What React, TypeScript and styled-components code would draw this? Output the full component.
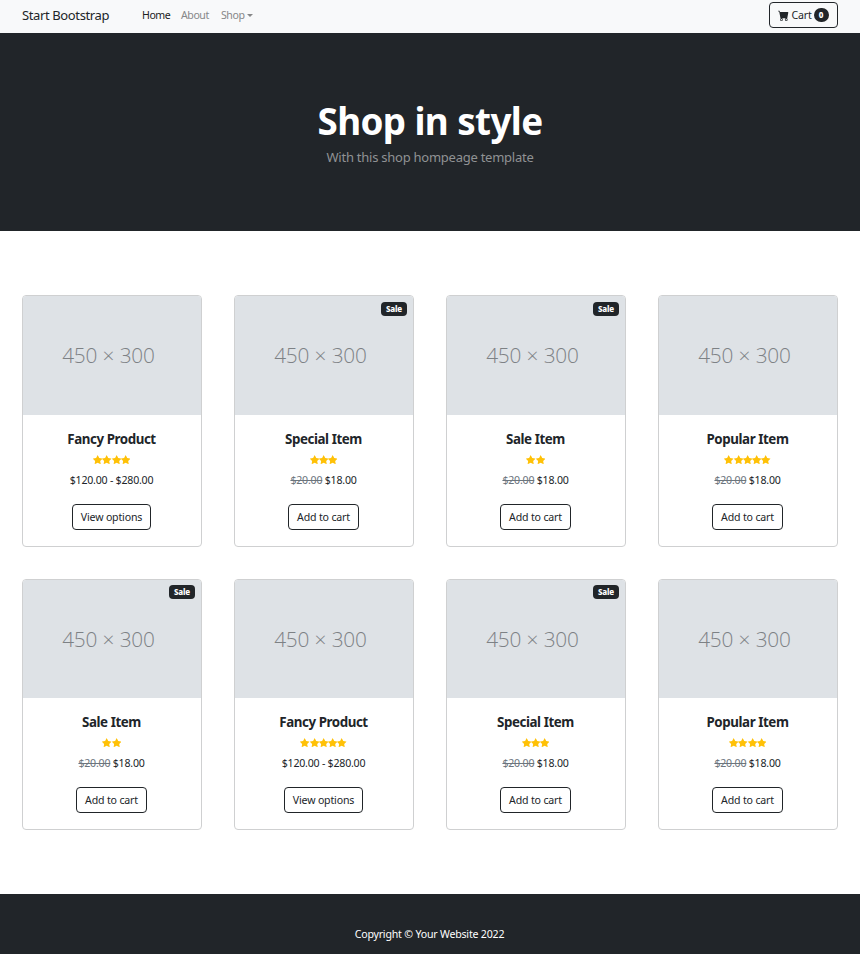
import React from "react";
import styled, { createGlobalStyle, css } from "styled-components";
import { BsCartFill, BsStarFill } from "react-icons/bs";

const ink = "#212529";

const GlobalStyle = createGlobalStyle`
  *, *::before, *::after { box-sizing: border-box; }
  body {
    margin: 0;
    background: #fff;
    color: ${ink};
    font-family: "Noto Sans", "Open Sans", sans-serif;
    font-size: 10.6px;
    font-weight: 400;
    line-height: 16px;
  }
  h1, h2, p { margin: 0; }
  a { color: inherit; text-decoration: none; }
`;

const Navbar = styled.nav`
  display: flex;
  align-items: center;
  height: 33px;
  padding: 0 22px 3px;
  background: #f8f9fa;
`;

const Brand = styled.a`
  width: 88px;
  margin-right: 32px;
  font-size: 13px;
  line-height: 20px;
  letter-spacing: -0.38px;
  white-space: nowrap;
`;

const NavLinks = styled.div`
  display: flex;
  gap: 11px;
  flex: 1;
`;

const NavLink = styled.a<{ $active?: boolean; $width: number }>`
  display: flex;
  align-items: center;
  width: ${(p) => p.$width}px;
  color: ${(p) => (p.$active ? "#202122" : "#868788")};
  letter-spacing: -0.45px;
  white-space: nowrap;
`;

const Caret = styled.span`
  margin-left: 2px;
  border-top: 3px solid currentColor;
  border-left: 3px solid transparent;
  border-right: 3px solid transparent;
`;

const OutlineButton = styled.button<{ $width: number }>`
  display: flex;
  align-items: center;
  justify-content: center;
  width: ${(p) => p.$width}px;
  height: 26px;
  padding: 0;
  border: 1px solid ${ink};
  border-radius: 4px;
  background: transparent;
  color: ${ink};
  font: inherit;
  letter-spacing: -0.17px;
  white-space: nowrap;
`;

const CartIcon = styled(BsCartFill)`
  width: 11px;
  height: 11px;
  margin-right: 2px;
`;

const darkLabel = css`
  background: ${ink};
  color: #fff;
  font-weight: 800;
`;

const CartCount = styled.span`
  ${darkLabel}
  width: 15px;
  height: 14px;
  margin-left: 2px;
  border-radius: 7px;
  font-size: 8px;
  line-height: 14px;
  text-align: center;
`;

const Hero = styled.header`
  height: 198px;
  padding-top: 66px;
  background: ${ink};
  color: #fff;
  text-align: center;
`;

const HeroTitle = styled.h1`
  font-size: 36.8px;
  font-weight: 700;
  line-height: 45px;
  letter-spacing: -0.6px;
`;

const HeroText = styled.p`
  margin-top: 3px;
  color: #909294;
  font-size: 13px;
  line-height: 20px;
  letter-spacing: -0.25px;
`;

const Products = styled.main`
  display: grid;
  grid-template-columns: repeat(4, 180px);
  grid-template-rows: 252px 251px;
  gap: 32px;
  padding: 64px 22px;
`;

const Card = styled.article`
  position: relative;
  display: flex;
  flex-direction: column;
  border: 1px solid #cfd0d1;
  border-radius: 4px;
  overflow: hidden;
`;

const CardBody = styled.div`
  display: flex;
  flex-direction: column;
  align-items: center;
  padding: 16px 1px 0 0;
`;

const Placeholder = styled.div<{ $height: number }>`
  height: ${(p) => p.$height}px;
  padding-right: 7px;
  background: #dee2e6;
  color: #7d8185;
  font-family: "Open Sans", sans-serif;
  font-size: 20.8px;
  font-weight: 330;
  line-height: 119px;
  letter-spacing: -0.13px;
  text-align: center;
`;

const SaleBadge = styled.span<{ $top: number }>`
  ${darkLabel}
  position: absolute;
  top: ${(p) => p.$top}px;
  right: 6px;
  width: 26px;
  height: 14px;
  border-radius: 4px;
  font-size: 8px;
  line-height: 14px;
  letter-spacing: -0.2px;
  text-align: center;
`;

const ProductName = styled.h2`
  font-size: 13.33px;
  font-weight: 700;
  line-height: 16px;
  letter-spacing: -0.42px;
`;

const Stars = styled.div`
  display: flex;
  height: 9px;
  margin: 8px 0;
  color: #ffc107;
  svg { width: 9.33px; height: 9.33px; }
`;

const Price = styled.p`
  margin-bottom: 16px;
  letter-spacing: -0.22px;
`;

const OldPrice = styled.span`
  color: #6c757d;
  text-decoration: line-through;
`;

const Footer = styled.footer`
  height: 60px;
  padding: 32px 1px 0 0;
  background: ${ink};
  color: #fff;
  letter-spacing: -0.2px;
  text-align: center;
`;

type Product = { name: string; stars: number; sale?: boolean; range?: boolean };

const products: Product[] = [
  { name: "Fancy Product", stars: 4, range: true },
  { name: "Special Item", stars: 3, sale: true },
  { name: "Sale Item", stars: 2, sale: true },
  { name: "Popular Item", stars: 5 },
  { name: "Sale Item", stars: 2, sale: true },
  { name: "Fancy Product", stars: 5, range: true },
  { name: "Special Item", stars: 3, sale: true },
  { name: "Popular Item", stars: 4 },
];

function ProductCard({ product, firstRow }: { product: Product; firstRow: boolean }) {
  return (
    <Card>
      <Placeholder $height={firstRow ? 119 : 118}>450 × 300</Placeholder>
      {product.sale && <SaleBadge $top={firstRow ? 6 : 5}>Sale</SaleBadge>}
      <CardBody>
        <ProductName>{product.name}</ProductName>
        <Stars>
          {Array.from({ length: product.stars }, (_, i) => (
            <BsStarFill key={i} />
          ))}
        </Stars>
        <Price>
          {product.range ? "$120.00 - $280.00" : <><OldPrice>$20.00</OldPrice> $18.00</>}
        </Price>
        <OutlineButton $width={product.range ? 79 : 71}>
          {product.range ? "View options" : "Add to cart"}
        </OutlineButton>
      </CardBody>
    </Card>
  );
}

export default function App() {
  return (
    <>
      <GlobalStyle />
      <Navbar>
        <Brand href="#">Start Bootstrap</Brand>
        <NavLinks>
          <NavLink href="#" $active $width={28}>Home</NavLink>
          <NavLink href="#" $width={29}>About</NavLink>
          <NavLink href="#" $width={33}>Shop<Caret /></NavLink>
        </NavLinks>
        <OutlineButton $width={69}>
          <CartIcon />Cart<CartCount>0</CartCount>
        </OutlineButton>
      </Navbar>
      <Hero>
        <HeroTitle>Shop in style</HeroTitle>
        <HeroText>With this shop hompeage template</HeroText>
      </Hero>
      <Products>
        {products.map((product, i) => (
          <ProductCard key={i} product={product} firstRow={i < 4} />
        ))}
      </Products>
      <Footer>Copyright © Your Website 2022</Footer>
    </>
  );
}
